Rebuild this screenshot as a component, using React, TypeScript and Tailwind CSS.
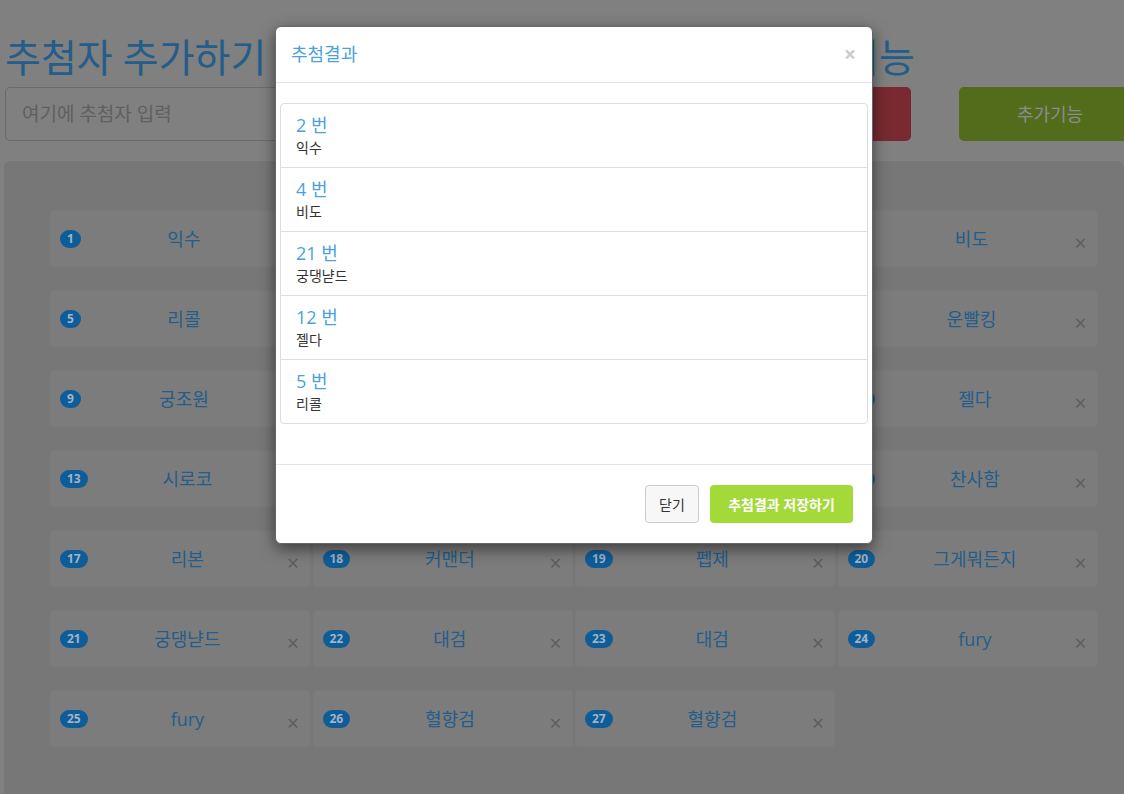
import React from "react";

// Page is drawn already dimmed (as under a modal backdrop), modal sits on top.
const cards: [number, string][] = [
  [1, "익수"], [2, "익수"], [3, "대검"], [4, "비도"],
  [5, "리콜"], [6, "fury"], [7, "커맨더"], [8, "운빨킹"],
  [9, "궁조원"], [10, "펩제"], [11, "리본"], [12, "젤다"],
  [13, "시로코"], [14, "혈향검"], [15, "그게뭐든지"], [16, "찬사함"],
  [17, "리본"], [18, "커맨더"], [19, "펩제"], [20, "그게뭐든지"],
  [21, "궁댕냗드"], [22, "대검"], [23, "대검"], [24, "fury"],
  [25, "fury"], [26, "혈향검"], [27, "혈향검"],
];

const results: [number, string][] = [
  [2, "익수"],
  [4, "비도"],
  [21, "궁댕냗드"],
  [12, "젤다"],
  [5, "리콜"],
];

function Card({ no, name }: { no: number; name: string }) {
  return (
    <div className="flex h-[57px] items-center rounded-[3px] border border-[#7a7a7a] bg-[#7c7c7c] pl-[9px] pr-[10px]">
      <span className="rounded-[10px] bg-[#0e5d99] px-[7px] py-[3px] text-[12px] font-bold leading-[12px] text-[#a3b4c4]">
        {no}
      </span>
      <span className="flex-1 text-center text-[18px] leading-[24px] text-[#245d8a]">{name}</span>
      <span className="mt-[9px] text-[21px] leading-none text-[#5c5c5c]">×</span>
    </div>
  );
}

export default function App() {
  return (
    <div className="relative h-[794px] w-[1124px] overflow-hidden bg-[#808080] font-['Open_Sans','Noto_Sans_CJK_KR',sans-serif]">
      <div className="pl-[5px]">
        <div className="flex w-[910px] justify-between pt-[35px]">
          <h1 className="text-[39px] leading-[43px] text-[#245d89]">추첨자 추가하기</h1>
          <h1 className="text-[39px] leading-[43px] text-[#245d89]">추첨기능</h1>
        </div>
        <div className="mt-[9px] flex h-[54px] items-stretch">
          <div className="flex w-[745px] shrink-0 items-center rounded-[5px] border border-[#6b6b6b] bg-[#808080] pl-[16px] text-[19px] text-[#5f5f5f]">
            여기에 추첨자 입력
          </div>
          <div className="ml-[10px] w-[151px] shrink-0 rounded-[5px] bg-[#782a30]" />
          <div className="ml-[48px] flex w-[182px] shrink-0 items-center justify-center rounded-[5px] bg-[#526c1b] text-[18px] text-[#8c8c8c]">
            추가기능
          </div>
        </div>
      </div>

      <div className="ml-[4px] mt-[20px] h-[700px] rounded-[6px] bg-[#777777] pl-[46px] pt-[49px]">
        <div className="grid grid-cols-[repeat(4,260px)] gap-x-[2.5px] gap-y-[23px]">
          {cards.map(([no, name]) => (
            <Card key={no} no={no} name={name} />
          ))}
        </div>
      </div>

      <div className="absolute left-[275px] top-[26px] w-[598px] rounded-[6px] border border-[#666] bg-white shadow-[0_5px_15px_rgba(0,0,0,0.5)]">
        <div className="flex items-center justify-between border-b border-[#e5e5e5] px-[15px] pb-[14px] pt-[14px]">
          <h4 className="text-[18px] leading-[27px] text-[#4aa3df]">추첨결과</h4>
          <span className="mr-[1px] text-[21px] font-bold leading-none text-[#cccccc]">×</span>
        </div>
        <div className="px-[4px] pb-[40px] pt-[20px]">
          <div className="rounded-[4px] border border-[#dddddd]">
            {results.map(([no, name], i) => (
              <div
                key={no}
                className={`px-[15px] pt-[9px] ${i > 0 ? "h-[64px] border-t border-[#dddddd]" : "h-[63px]"}`}
              >
                <div className="text-[18px] leading-[24px] text-[#4aa3df]">{no} 번</div>
                <div className="mt-[1px] text-[14px] leading-[20px] text-[#333333]">{name}</div>
              </div>
            ))}
          </div>
        </div>
        <div className="flex justify-end gap-[11px] border-t border-[#e5e5e5] px-[19px] pb-[20px] pt-[20px]">
          <button className="h-[38px] w-[54px] rounded-[4px] border border-[#cccccc] bg-[#f7f7f7] text-[14px] text-[#333333]">
            닫기
          </button>
          <button className="h-[38px] w-[143px] rounded-[4px] bg-[#a3d938] text-[14px] font-bold text-white">
            추첨결과 저장하기
          </button>
        </div>
      </div>
    </div>
  );
}
